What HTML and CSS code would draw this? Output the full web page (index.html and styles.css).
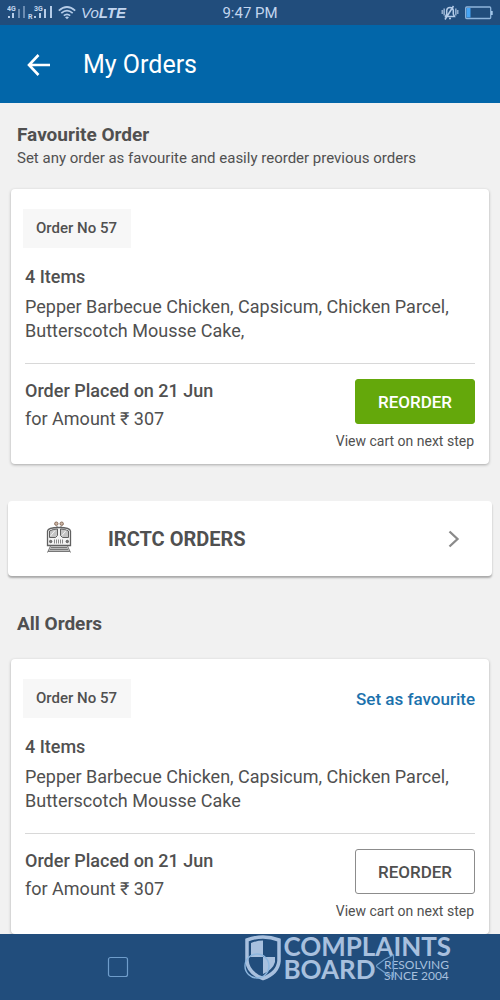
FILE: index.html
```html
<!DOCTYPE html>
<html lang="en">
<head>
<meta charset="utf-8">
<meta name="viewport" content="width=device-width, initial-scale=1">
<title>My Orders</title>
<link rel="stylesheet" href="styles.css">
</head>
<body>
<div class="screen">
  <div class="status">
    <div class="status-left">
      <svg class="signal" width="46" height="18" viewBox="0 0 46 18" aria-hidden="true">
        <text class="net" x="0" y="7">4G</text>
        <text class="net" x="27" y="7">3G</text>
        <text class="net" x="21" y="15">R</text>
        <g stroke="#b5cce8" stroke-width="2">
          <path d="M2 12v2M6 9v5M28 12v2M33 9v5M38 5v9M44 2v12"/>
          <path d="M12 5v9M17 2v12" opacity=".5"/>
        </g>
      </svg>
      <svg width="18" height="14" viewBox="0 0 18 14" fill="none" stroke="#b5cce8" stroke-width="1.7" aria-hidden="true">
        <path d="M.8 4.6Q9-2.6 17.2 4.6M3.3 7.2Q9 2.2 14.7 7.2M5.8 9.7Q9 7 12.2 9.7"/>
        <path d="M7 11.2Q9 10 11 11.2L9 13.2z" fill="#b5cce8" stroke="none"/>
      </svg>
      <span class="volte">Vo<b>LTE</b></span>
    </div>
    <span class="time">9:47 PM</span>
    <div class="status-right">
      <svg width="18" height="16" viewBox="0 0 18 16" fill="none" stroke="#b5cce8" aria-hidden="true">
        <path stroke-width="1.5" d="M4.5 11.5h9L12.300 9V5.500Q12 2.500 9 2.500T5.700 5.500V9zM8 13.500h2M12.500 1L4 14.500"/>
        <path stroke-width="1.6" opacity=".75" d="M3.200 3.500v7M1.300 5v4M14.800 3.500v7M16.700 5v4"/>
      </svg>
      <svg width="28" height="14" viewBox="0 0 28 14" aria-hidden="true">
        <rect x=".7" y="1" width="25" height="11.500" rx="1" fill="none" stroke="#8fb5dc" stroke-width="1.300"/>
        <path d="M1.500 2h4v9.500h-4z" fill="#45a4f5"/>
        <path d="M26 5h1.700v4H26z" fill="#a5c8ea"/>
      </svg>
    </div>
  </div>
  <header class="appbar">
    <button class="back" type="button" aria-label="Back">
      <svg width="24" height="24" viewBox="0 0 24 24" fill="none" stroke="#fff" stroke-width="2.600"><path d="M24 12H3M12.500 2L3 12L12.500 22"/></svg>
    </button>
    <h1 class="title">My Orders</h1>
  </header>

  <main class="content">
    <section>
      <h2 class="heading">Favourite Order</h2>
      <p class="sub">Set any order as favourite and easily reorder previous orders</p>
      <article class="card">
        <div class="card-top"><span class="tag">Order No 57</span></div>
        <div class="card-body">
          <h3 class="count">4 Items</h3>
          <p class="items">Pepper Barbecue Chicken, Capsicum, Chicken Parcel, Butterscotch Mousse Cake,</p>
          <div class="card-foot">
            <div class="placed"><strong>Order Placed on 21 Jun</strong><span>for Amount ₹ 307</span></div>
            <div class="action"><button class="reorder filled" type="button">REORDER</button><span class="hint">View cart on next step</span></div>
          </div>
        </div>
      </article>
    </section>

    <a class="irctc" href="#irctc">
      <svg class="train" width="26" height="32" viewBox="0 0 26 32" fill="none" stroke="#606060" aria-hidden="true">
        <g stroke="#8a6f5e" fill="#cbb5a4"><circle cx="10.300" cy="2.700" r="1.700"/><circle cx="15.700" cy="2.700" r="1.700"/></g>
        <path d="M11 5v1.500M15 5v1.500" stroke="#777"/>
        <path d="M1.500 24.500V10Q2 6.500 13 6.500T24.500 10V24.500z" stroke-width="1.300" fill="#f4f4f4"/>
        <path d="M3.500 16.500V10Q7 8 11.500 8V14.500L9.500 16.500zM22.500 16.500V10Q19 8 14.500 8V14.500L16.500 16.500z" fill="#c4c4c4"/>
        <path d="M4.500 15L9 9.500M16 14.500L20 9.500" stroke="#f4f4f4"/>
        <g fill="#777"><circle cx="4.700" cy="20.500" r="1.200"/><circle cx="21.300" cy="20.500" r="1.200"/></g>
        <path d="M8.500 18.500v4M10.500 18.500v4M12.500 18.500v4M14.500 18.500v4M16.500 18.500v4" stroke="#888"/>
        <path d="M5 25h16l2.500 5h-21z" fill="#bbb" stroke="none"/>
        <path d="M5 26.500h16M4 28.500h18M2 30.500h22M4.500 25L1.500 31.500M21.500 25l3 6.500" stroke="#777"/>
      </svg>
      <span class="irctc-label">IRCTC ORDERS</span>
      <svg width="12" height="18" viewBox="0 0 12 18" fill="none" stroke="#8a8a8a" stroke-width="2.300" aria-hidden="true"><path d="M1.500 1.500L9.500 9L1.500 16.500"/></svg>
    </a>

    <section>
      <h2 class="heading">All Orders</h2>
      <article class="card all">
        <div class="card-top"><span class="tag">Order No 57</span><a class="set" href="#favourite">Set as favourite</a></div>
        <div class="card-body">
          <h3 class="count">4 Items</h3>
          <p class="items">Pepper Barbecue Chicken, Capsicum, Chicken Parcel, Butterscotch Mousse Cake</p>
          <div class="card-foot">
            <div class="placed"><strong>Order Placed on 21 Jun</strong><span>for Amount ₹ 307</span></div>
            <div class="action"><button class="reorder" type="button">REORDER</button><span class="hint">View cart on next step</span></div>
          </div>
        </div>
      </article>
    </section>
  </main>

  <nav class="navbar">
    <button class="nav-btn" type="button" aria-label="Recent apps"><svg width="22" height="22" viewBox="0 0 22 22" fill="none" stroke="#6f9dcb" stroke-width="1.200"><rect x="1.500" y="1.500" width="19" height="19" rx="2"/></svg></button>
    <div class="brand">
      <svg width="38" height="46" viewBox="0 0 38 46" aria-hidden="true">
        <path d="M3 5Q19-1 35 5V26Q34 38 19 43.500Q4 38 3 26z" fill="none" stroke="#a8c0de" stroke-width="3.500"/>
        <path d="M7 8Q13 5.500 19 5.500V22H7zM19 22H31V27Q29 34.500 19 39z" fill="#a8c0de"/>
        <circle cx="13" cy="31" r="12" fill="none" stroke="#8cb6df" stroke-width="1.400"/>
      </svg>
      <div class="brand-text">
        <span class="brand-name">COMPLAINTS</span>
        <span class="brand-row"><span class="brand-name">BOARD</span><span class="since"><span>RESOLVING</span><span>SINCE 2004</span></span></span>
      </div>
      <svg class="nav-back" width="20" height="24" viewBox="0 0 20 24" fill="none" stroke="#6f9dcb" stroke-width="1.200" aria-hidden="true"><path d="M18.500 1Q9 5 2 11Q1 12 2 13Q9 19 18.500 23z"/></svg>
    </div>
  </nav>
</div>
</body>
</html>
```
FILE: styles.css
```css
* { box-sizing: border-box; }
body { margin: 0; background: #f1f1f1; color: #505050; font-family: Roboto, "Noto Sans", sans-serif; }
h1, h2, h3, p { margin: 0; }
button { font: inherit; cursor: pointer; }
.screen { display: flex; flex-direction: column; min-height: 100vh; }

.status {
  display: grid; grid-template-columns: 1fr auto 1fr; align-items: center;
  height: 25px; padding: 0 7px; background: #214d7c; color: #c3d6ef;
}
.status-left, .status-right { display: flex; align-items: center; gap: 5px; }
.status-right { justify-content: flex-end; gap: 6px; }
.net { fill: #c3d6ef; font: bold 7px Roboto, sans-serif; }
.volte { font: italic 15px/24px "Liberation Sans", Arial, sans-serif; }
.time { font-size: 15px; line-height: 24px; }

.appbar { display: flex; align-items: center; gap: 33px; height: 78px; padding: 2px 26px 0; background: #0266a9; color: #fff; }
.back { display: flex; padding: 0; border: 0; background: none; }
.title { font-size: 25px; font-weight: 400; line-height: 32px; }

.content { flex: 1; padding: 20px 0 0; }
.heading { padding: 0 17px; font-size: 19px; font-weight: 700; line-height: 24px; }
.sub { padding: 0 17px; font-size: 15px; line-height: 22px; }
.card { margin: 20px 11px 0; padding: 20px 12px 12px; background: #fff; border-radius: 4px; box-shadow: 0 1px 3px rgba(0, 0, 0, .3); }
.all { margin-top: 23px; }
.card-top { display: flex; align-items: center; justify-content: space-between; padding-right: 2px; }
.tag { padding: 0 14px 0 13px; background: #f7f7f7; font-size: 15px; font-weight: 500; line-height: 39px; }
.set { color: #1c72ad; font-size: 17px; font-weight: 500; text-decoration: none; }
.card-body { padding: 17px 2px 0; }
.count { font-size: 18px; font-weight: 500; line-height: 24px; }
.items { margin-top: 6px; font-size: 18px; line-height: 24px; }
.card-foot { display: flex; justify-content: space-between; margin-top: 20px; padding-top: 15px; border-top: 1px solid #d8d8d8; }
.placed { display: flex; flex-direction: column; margin-top: -2px; font-size: 18px; line-height: 28px; }
.placed strong { font-weight: 500; }
.action { display: flex; flex-direction: column; align-items: flex-end; }
.reorder { width: 120px; height: 45px; padding: 0; border: 1px solid #8c8c8c; border-radius: 3px; background: #fff; color: #505050; font-size: 17px; font-weight: 500; }
.filled { border-color: #64a80b; background: #64a80b; color: #fff; }
.hint { margin-top: 6px; padding-right: 1px; font-size: 14px; line-height: 22px; }

.irctc {
  display: flex; align-items: center; height: 75px; margin: 37px 8px 36px; padding: 0 32px 0 38px;
  background: #fff; border-radius: 4px; box-shadow: 0 2px 2px rgba(0, 0, 0, .3); color: #505050; text-decoration: none;
}
.train { margin-bottom: 4px; }
.irctc-label { flex: 1; margin-left: 36px; font-size: 20px; font-weight: 700; line-height: 24px; }

.navbar { position: sticky; bottom: 0; display: flex; align-items: center; justify-content: space-between; height: 66px; padding: 0 49px 0 107px; background: #214d7c; }
.nav-btn { display: flex; padding: 0; border: 0; background: none; }
.brand { position: relative; display: flex; align-self: flex-start; gap: 1px; padding-top: 1px; color: #a8c0de; }
.brand-name { font: 700 26px/23px Lato, sans-serif; }
.brand-text, .brand-row, .since { display: flex; }
.brand-text, .since { flex-direction: column; }
.brand-row { align-items: center; justify-content: space-between; }
.since { padding-right: 2px; font: 12px/11px Lato, sans-serif; white-space: nowrap; }
.nav-back { position: absolute; right: 56px; top: 20px; }
```
